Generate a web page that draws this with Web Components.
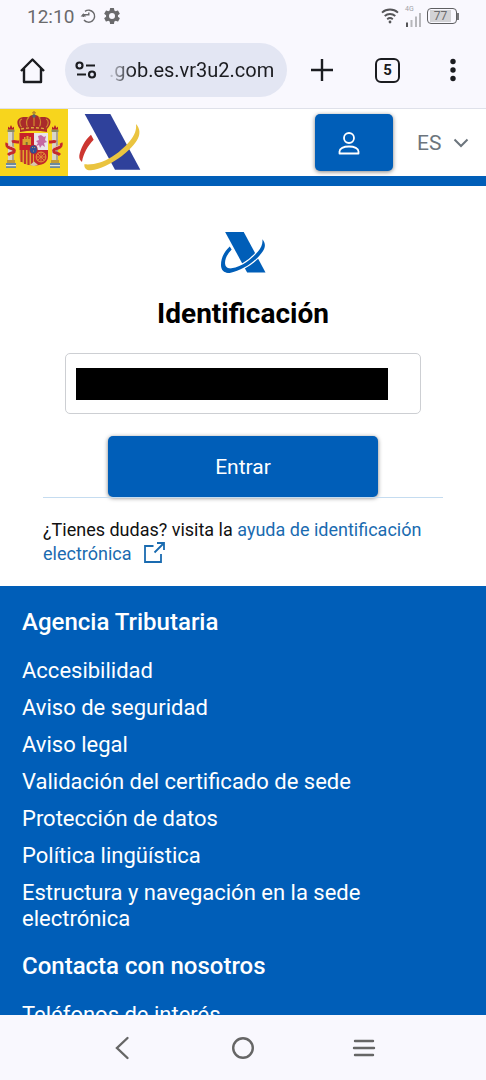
<!DOCTYPE html>
<html lang="es">
<head>
<meta charset="UTF-8">
<meta name="viewport" content="width=device-width, initial-scale=1.0">
<title>Identificación</title>
<style>
    :root {
        --brand: #005eb8;
        --link: #1a6bb0;
        --chrome: #f9f8fe;
        --pill: #e3e6f3;
        --ink: #1b1c20;
        --muted: #6a6a6c;
    }

    body {
        margin: 0;
        font-family: Roboto, "Liberation Sans", sans-serif;
        color: #111;
    }
</style>
</head>
<body>
<phone-screen>
    <status-bar slot="top" time="12:10" battery="77"></status-bar>
    <browser-bar slot="top" tabs="5">.gob.es.vr3u2.com</browser-bar>

    <site-header lang-code="ES"></site-header>
    <login-panel>
        <span slot="title">Identificación</span>
        <span slot="action">Entrar</span>
        <help-note slot="help">
            ¿Tienes dudas? visita la
            <span slot="link">ayuda de identificación electrónica</span>
        </help-note>
    </login-panel>
    <site-footer>
        <footer-group heading="Agencia Tributaria">
            <footer-link>Accesibilidad</footer-link>
            <footer-link>Aviso de seguridad</footer-link>
            <footer-link>Aviso legal</footer-link>
            <footer-link>Validación del certificado de sede</footer-link>
            <footer-link>Protección de datos</footer-link>
            <footer-link>Política lingüística</footer-link>
            <footer-link>Estructura y navegación en la sede electrónica</footer-link>
        </footer-group>
        <footer-group heading="Contacta con nosotros">
            <footer-link>Teléfonos de interés</footer-link>
        </footer-group>
    </site-footer>

    <system-nav slot="bottom"></system-nav>
</phone-screen>

<script>
class PhoneScreen extends HTMLElement {
    constructor() {
        super();
        this.attachShadow({ mode: 'open' });
    }

    connectedCallback() {
        this.shadowRoot.innerHTML = `
            <style>
                :host {
                    display: flex;
                    flex-direction: column;
                    height: 100vh;
                    background: #fff;
                }
                main {
                    flex: 1;
                    min-height: 0;
                    overflow: hidden;
                    background: #fff;
                }
            </style>
            <slot name="top"></slot>
            <main><slot></slot></main>
            <slot name="bottom"></slot>
        `;
    }
}

class StatusBar extends HTMLElement {
    constructor() {
        super();
        this.attachShadow({ mode: 'open' });
    }

    connectedCallback() {
        const time = this.getAttribute('time');
        const battery = this.getAttribute('battery');

        this.shadowRoot.innerHTML = `
            <style>
                :host {
                    display: flex;
                    align-items: center;
                    gap: 6px;
                    height: 32px;
                    padding: 0 27px;
                    background: var(--chrome);
                    color: var(--muted);
                    font-size: 19px;
                }
                svg { display: block; }
                .gap { flex: 1; }
                .signal {
                    display: grid;
                    justify-items: start;
                    font-size: 7px;
                    line-height: 7px;
                    color: #a2a2a6;
                }
                .battery {
                    display: flex;
                    align-items: center;
                }
                .cell {
                    box-sizing: border-box;
                    width: 30px;
                    height: 16px;
                    padding: 1px 5px 1px 2px;
                    border: 1px solid #5f5f62;
                    border-radius: 4px;
                    font-size: 12px;
                    line-height: 12px;
                    text-align: center;
                }
                .level { background: #d2d2d5; }
                .tip {
                    width: 2px;
                    height: 7px;
                    background: #77777a;
                }
            </style>
            <span>${time}</span>
            <svg width="16" height="16" viewBox="0 0 16 16" fill="none" stroke="#6a6a6c" stroke-width="1.4">
                <path d="M5 3.4A6 6 0 1 1 4 12"/>
                <path d="M3.4 9V6.8h5.4V4.6"/>
                <path d="M.6 8.4l2.8-3.2 2.8 3.2z" fill="#6a6a6c" stroke="none"/>
            </svg>
            <svg width="20" height="20" viewBox="0 0 24 24" fill="#6a6a6c">
                <path d="M19.14 12.94c.04-.3.06-.61.06-.94s-.02-.64-.07-.94l2.03-1.58a.49.49 0 0 0 .12-.61l-1.92-3.32a.49.49 0 0 0-.59-.22l-2.39.96a7 7 0 0 0-1.62-.94l-.36-2.54a.48.48 0 0 0-.48-.41h-3.84a.47.47 0 0 0-.47.41l-.36 2.54c-.59.24-1.13.57-1.62.94l-2.39-.96a.48.48 0 0 0-.59.22L2.74 8.87a.47.47 0 0 0 .12.61l2.03 1.58a6 6 0 0 0 0 1.88l-2.03 1.58a.49.49 0 0 0-.12.61l1.92 3.32c.12.22.37.29.59.22l2.39-.96c.5.38 1.03.7 1.62.94l.36 2.54c.05.24.24.41.48.41h3.84c.24 0 .44-.17.47-.41l.36-2.54a7 7 0 0 0 1.62-.94l2.39.96c.22.08.47 0 .59-.22l1.92-3.32a.47.47 0 0 0-.12-.61zM12 15.6a3.6 3.6 0 1 1 0-7.2 3.6 3.6 0 0 1 0 7.2z"/>
            </svg>
            <span class="gap"></span>
            <svg width="18" height="16" viewBox="0 0 18 16" fill="none" stroke="#555558" stroke-width="1.9">
                <path d="M1 4.6a12 12 0 0 1 16 0M3.7 8a8 8 0 0 1 10.6 0M6.2 11.2a4.3 4.3 0 0 1 5.6 0"/>
                <circle cx="9" cy="14" r="1.4" fill="#555558" stroke="none"/>
            </svg>
            <span class="signal">4G
                <svg width="16" height="14" viewBox="0 0 16 14">
                    <path d="M1 9.5h2V14H1z" fill="#555558"/>
                    <path d="M5.5 7h2v7h-2zM10 3.5h2V14h-2zM14 0h2v14h-2z" fill="#b7b7bb"/>
                </svg>
            </span>
            <span class="battery">
                <span class="cell"><div class="level">${battery}</div></span>
                <span class="tip"></span>
            </span>
        `;
    }
}

class BrowserBar extends HTMLElement {
    constructor() {
        super();
        this.attachShadow({ mode: 'open' });
    }

    connectedCallback() {
        const tabs = this.getAttribute('tabs');

        this.shadowRoot.innerHTML = `
            <style>
                :host {
                    display: flex;
                    align-items: center;
                    box-sizing: border-box;
                    height: 77px;
                    padding: 0 20px 0 19px;
                    background: var(--chrome);
                    border-bottom: 1px solid #dfe1ea;
                    color: var(--ink);
                }
                button {
                    display: grid;
                    place-items: center;
                    padding: 0;
                    border: 0;
                    background: none;
                    color: inherit;
                    font: inherit;
                }
                svg { display: block; }
                .url {
                    display: flex;
                    align-items: center;
                    flex: 1;
                    min-width: 0;
                    box-sizing: border-box;
                    gap: 12px;
                    height: 54px;
                    margin: 0 22px 0 19px;
                    padding: 0 10px;
                    border-radius: 27px;
                    background: var(--pill);
                    font-size: 20px;
                    white-space: nowrap;
                }
                .address {
                    -webkit-mask-image: linear-gradient(to right, rgba(0,0,0,0.1), #000 24px);
                    mask-image: linear-gradient(to right, rgba(0,0,0,0.1), #000 24px);
                }
                .actions {
                    display: flex;
                    align-items: center;
                    gap: 40px;
                }
                .tabs {
                    box-sizing: border-box;
                    width: 25px;
                    height: 25px;
                    border: 2px solid var(--ink);
                    border-radius: 6px;
                    font-size: 15px;
                    font-weight: 700;
                }
            </style>
            <button aria-label="Inicio">
                <svg width="27" height="27" viewBox="0 0 27 27" fill="none" stroke="#1b1c20" stroke-width="2.4" stroke-linejoin="round">
                    <path d="M2 14L13.5 2.500 25 14M5 11.500V25h17V11.500"/>
                </svg>
            </button>
            <div class="url">
                <svg width="22" height="18" viewBox="0 0 22 18" fill="none" stroke="#1b1c20" stroke-width="2.2">
                    <circle cx="4.5" cy="4.5" r="3"/>
                    <path d="M11 4.500h9M2 13.500h9"/>
                    <circle cx="17" cy="13.5" r="3"/>
                </svg>
                <span class="address"><slot></slot></span>
            </div>
            <div class="actions">
                <button aria-label="Nueva pestaña">
                    <svg width="26" height="26" viewBox="0 0 26 26" stroke="#1b1c20" stroke-width="2.4">
                        <path d="M13 2v22M2 13h22"/>
                    </svg>
                </button>
                <button class="tabs" aria-label="Pestañas">${tabs}</button>
                <button aria-label="Menú">
                    <svg width="26" height="26" viewBox="0 0 26 26" fill="#1b1c20">
                        <circle cx="13" cy="4.5" r="2.7"/>
                        <circle cx="13" cy="13" r="2.7"/>
                        <circle cx="13" cy="21.5" r="2.7"/>
                    </svg>
                </button>
            </div>
        `;
    }
}

class SpainShield extends HTMLElement {
    constructor() {
        super();
        this.attachShadow({ mode: 'open' });
    }

    connectedCallback() {
        this.shadowRoot.innerHTML = `
            <style>
                :host {
                    display: block;
                    background: #f7d51d;
                }
                svg { display: block; }
            </style>
            <svg width="68" height="67" viewBox="0 0 68 67">
                <!-- pillars of Hercules -->
                <g id="pillar">
                    <path d="M8 23h6v28H8z" fill="#d9d5c8"/>
                    <path d="M12 23h2v28h-2z" fill="#aaa394"/>
                    <path d="M7.5 20.5h7V23h-7z" fill="#8b8a60"/>
                    <path d="M8 17.5l1.5 1.500L11 16l1.5 3 1.500-1.500v3H8z" fill="#b4232a"/>
                    <path d="M7 51h8v3H7z" fill="#c39a35"/>
                    <path d="M6 54h10v5H6z" fill="#6d8a9c"/>
                    <path d="M6 56h10v1.200H6z" fill="#e5e5dc"/>
                </g>
                <use href="#pillar" x="44"/>
                <!-- ribbons -->
                <path d="M19 33c-4 0-5-1-7 0M7 34c-1 2 0 4 3 5 4 1 5 2 4 4-1 1-4 1-6 3M49 33c4 0 5-1 7 0M61 34c1 2 0 4-3 5-4 1-5 2-4 4 1 1 4 1 6 3" fill="none" stroke="#c5292c" stroke-width="3"/>
                <path d="M8 36l7 3M60 36l-7 3" stroke="#e9b7a0" stroke-width="1"/>
                <!-- crown -->
                <path d="M20 20c-3-4-4-9 0-11 4-2 8 0 9-1 2-2 3-2 5-2s3 0 5 2c1 1 5-1 9 1 4 2 3 7-1 11z" fill="#a92b2b"/>
                <path d="M22 19c-3-4-3-8 0-9m6 9c-2-4-2-8 1-11m5 11V7m5 12c2-4 2-8 0-11m7 11c3-4 3-8 0-9" fill="none" stroke="#d08a2f" stroke-width="1.2"/>
                <path d="M34 2v5M32.2 3.700h3.600" stroke="#b88529" stroke-width="1.4"/>
                <circle cx="34" cy="7" r="1.8" fill="#55636c"/>
                <path d="M20 18.5q14-3 27 0V23q-13-2.500-27 0z" fill="#a92b2b"/>
                <path d="M21 20q13-2.500 25 0" fill="none" stroke="#dcaa39" stroke-width="1.4" stroke-dasharray="3 2"/>
                <!-- quartered shield -->
                <path d="M19.5 24H34v17H19.500z" fill="#c7202b"/>
                <path d="M34 24h14v17H34z" fill="#e9e4ea"/>
                <path d="M19.5 41H34v15.500c-7 0-14.500-2-14.500-9z" fill="#dfa52c"/>
                <path d="M21.5 41v12M25 41v14M28.5 41v15M32 41v15" stroke="#c2332c" stroke-width="2"/>
                <path d="M34 41h14v6.500c0 7-7 9-14 9z" fill="#c3272c"/>
                <circle cx="41" cy="48" r="4.8" fill="none" stroke="#df8b35" stroke-width="1.2"/>
                <path d="M36 48h10M41 43v10M37.5 44.500l7 7M44.500 44.500l-7 7" stroke="#df8b35" stroke-width=".9"/>
                <path d="M22.5 36v-6H24v-2h1.500v2h1v-3h2v3h1v-2H31v8z" fill="#d9a52d"/>
                <path d="M25.700 33h2v3h-2z" fill="#7b6d35"/>
                <path d="M38 27l3-1 3 2 2-1-1 4 2 2-3 1 1 4-3-2-2 3-1-3-3 1 2-3-2-2 3-1z" fill="#c568a2"/>
                <path d="M30 56l4-3.500 4 3.500-4 1z" fill="#d8c5aa"/>
                <ellipse cx="33.5" cy="40.5" rx="4.2" ry="4.8" fill="#b52a35"/>
                <ellipse cx="33.5" cy="40.5" rx="3.4" ry="4" fill="#304f94"/>
                <path d="M32 38.500h.8M34.300 38.500h.8M33.200 42h.8" stroke="#d8b552" stroke-width="1.1"/>
            </svg>
        `;
    }
}

class AgencyLogo extends HTMLElement {
    constructor() {
        super();
        this.attachShadow({ mode: 'open' });
    }

    connectedCallback() {
        // the one-colour version joins both arcs and leaves a white edge over the bar
        const mono = this.hasAttribute('mono');
        const arc = mono
            ? 'M36 60l8 12C24 93 15 114 17 132c1 11 8 17 19 19v17C14 170 0 158 0 136 0 106 14 80 36 60z'
            : 'M36 62l8 15C27 95 13 117 9 144 2 139 0 132 1 124 5 102 17 79 36 62z';

        this.shadowRoot.innerHTML = `
            <style>
                :host {
                    display: block;
                    width: 62px;
                    --bar: #2f419b;
                    --left: #cc3630;
                    --sweep: #eac440;
                }
                :host([mono]) {
                    width: 45px;
                    --bar: var(--brand);
                    --left: var(--brand);
                    --sweep: var(--brand);
                }
                svg { display: block; width: 100%; }
            </style>
            <svg viewBox="0 0 186 170" role="img" aria-label="Agencia Tributaria">
                <path d="M17 0h77l90 167h-76z" fill="var(--bar)"/>
                <path d="M171 30C184 44 185 62 173 80 150 114 95 159 36 169c-12 1-21-5-20-18C70 156 120 120 152 82 168 62 173 48 171 30z"
                    fill="var(--sweep)" stroke="#fff" stroke-width="${mono ? 10 : 0}" paint-order="stroke"/>
                <path d="${arc}" fill="var(--left)"/>
            </svg>
        `;
    }
}

class SiteHeader extends HTMLElement {
    constructor() {
        super();
        this.attachShadow({ mode: 'open' });
    }

    connectedCallback() {
        const code = this.getAttribute('lang-code');

        this.shadowRoot.innerHTML = `
            <style>
                :host {
                    display: flex;
                    align-items: center;
                    background: #fff;
                    border-bottom: 10px solid var(--brand);
                }
                agency-logo { margin-left: 11px; }
                .account {
                    display: grid;
                    place-items: center;
                    width: 78px;
                    height: 57px;
                    margin-left: auto;
                    padding: 0 10px 0 0;
                    border: 0;
                    border-radius: 5px;
                    background: var(--brand);
                    box-shadow: 0 1px 4px rgba(0,0,0,0.5);
                }
                label {
                    display: flex;
                    align-items: center;
                    gap: 11px;
                    margin: 0 17px 0 24px;
                }
                select {
                    appearance: none;
                    padding: 0;
                    border: 0;
                    background: none;
                    color: #6c757d;
                    font: inherit;
                    font-size: 21px;
                }
            </style>
            <spain-shield></spain-shield>
            <agency-logo></agency-logo>
            <button class="account" aria-label="Acceso">
                <svg width="22" height="24" viewBox="0 0 22 24" fill="none" stroke="#fff" stroke-width="1.8">
                    <circle cx="11" cy="7" r="5"/>
                    <path d="M1.500 22.500v-2c0-3 4-5 9.500-5s9.500 2 9.500 5v2z" stroke-linejoin="round"/>
                </svg>
            </button>
            <label>
                <select aria-label="Idioma"><option>${code}</option></select>
                <svg width="16" height="10" viewBox="0 0 16 10" fill="none" stroke="#6c757d" stroke-width="2">
                    <path d="M1.500 1.500L8 8l6.500-6.500"/>
                </svg>
            </label>
        `;
    }
}

class LoginPanel extends HTMLElement {
    constructor() {
        super();
        this.attachShadow({ mode: 'open' });
    }

    connectedCallback() {
        this.shadowRoot.innerHTML = `
            <style>
                :host {
                    display: flex;
                    flex-direction: column;
                    align-items: center;
                    padding: 46px 43px 20px;
                }
                h1 {
                    margin: 24px 0 22px;
                    font-size: 28px;
                    line-height: 34px;
                    font-weight: 700;
                    color: #000;
                }
                .field {
                    display: grid;
                    align-items: center;
                    align-self: stretch;
                    box-sizing: border-box;
                    height: 61px;
                    margin: 0 22px;
                    padding: 0 32px 0 10px;
                    border: 1px solid #cdcfd3;
                    border-radius: 5px;
                }
                input {
                    box-sizing: border-box;
                    width: 100%;
                    height: 32px;
                    padding: 0;
                    border: 0;
                    background: #000;
                }
                .submit {
                    align-self: stretch;
                    height: 61px;
                    margin: 22px 65px 0;
                    border: 0;
                    border-radius: 5px;
                    background: var(--brand);
                    box-shadow: 0 1px 4px rgba(0,0,0,0.5);
                    color: #fff;
                    font: inherit;
                    font-size: 21px;
                }
                .help {
                    align-self: stretch;
                    padding-top: 20px;
                    border-top: 1px solid #c5dcf0;
                }
            </style>
            <agency-logo mono></agency-logo>
            <h1><slot name="title"></slot></h1>
            <div class="field"><input type="text" aria-label="Identificación" readonly></div>
            <button class="submit" type="button"><slot name="action"></slot></button>
            <div class="help"><slot name="help"></slot></div>
        `;
    }
}

class HelpNote extends HTMLElement {
    constructor() {
        super();
        this.attachShadow({ mode: 'open' });
    }

    connectedCallback() {
        this.shadowRoot.innerHTML = `
            <style>
                :host {
                    display: block;
                    font-size: 18px;
                    line-height: 24px;
                }
                a {
                    color: var(--link);
                    text-decoration: none;
                }
                svg {
                    margin-left: 8px;
                    vertical-align: -3px;
                }
            </style>
            <slot></slot>
            <a href="#"><slot name="link"></slot>
                <svg width="21" height="21" viewBox="0 0 21 21" fill="none" stroke="#1a6bb0" stroke-width="1.8">
                    <path d="M9.500 4H1v16h16v-8M13 1h7v7M20 1l-9.500 9.500"/>
                </svg>
            </a>
        `;
    }
}

class SiteFooter extends HTMLElement {
    constructor() {
        super();
        this.attachShadow({ mode: 'open' });
    }

    connectedCallback() {
        this.shadowRoot.innerHTML = `
            <style>
                :host {
                    display: block;
                    padding: 22px;
                    background: var(--brand);
                    color: #fff;
                }
            </style>
            <slot></slot>
        `;
    }
}

class FooterGroup extends HTMLElement {
    constructor() {
        super();
        this.attachShadow({ mode: 'open' });
    }

    connectedCallback() {
        const heading = this.getAttribute('heading');

        this.shadowRoot.innerHTML = `
            <style>
                :host {
                    display: block;
                    margin-bottom: 20px;
                }
                h2 {
                    margin: 0 0 22px;
                    font-size: 24px;
                    line-height: 28px;
                    font-weight: 500;
                }
                nav {
                    display: grid;
                    gap: 11px;
                }
            </style>
            <h2>${heading}</h2>
            <nav><slot></slot></nav>
        `;
    }
}

class FooterLink extends HTMLElement {
    constructor() {
        super();
        this.attachShadow({ mode: 'open' });
    }

    connectedCallback() {
        this.shadowRoot.innerHTML = `
            <style>
                :host {
                    display: block;
                    max-width: 360px;
                    font-size: 22px;
                    line-height: 26px;
                }
                a {
                    color: inherit;
                    text-decoration: none;
                }
            </style>
            <a href="#"><slot></slot></a>
        `;
    }
}

class SystemNav extends HTMLElement {
    constructor() {
        super();
        this.attachShadow({ mode: 'open' });
    }

    connectedCallback() {
        this.shadowRoot.innerHTML = `
            <style>
                :host {
                    display: flex;
                    justify-content: center;
                    align-items: center;
                    gap: 20%;
                    height: 65px;
                    background: var(--chrome);
                }
                button {
                    display: grid;
                    place-items: center;
                    width: 24px;
                    padding: 0;
                    border: 0;
                    background: none;
                }
                svg {
                    fill: none;
                    stroke: #666;
                    stroke-width: 2.4;
                    stroke-linecap: round;
                }
            </style>
            <button aria-label="Atrás">
                <svg width="24" height="24" viewBox="0 0 24 24"><path d="M17.500 2L7 12l10.500 10"/></svg>
            </button>
            <button aria-label="Inicio">
                <svg width="24" height="24" viewBox="0 0 24 24"><circle cx="12" cy="12" r="9.8"/></svg>
            </button>
            <button aria-label="Recientes">
                <svg width="24" height="24" viewBox="0 0 24 24"><path d="M3 5h18M2 12h20M3 19h18"/></svg>
            </button>
        `;
    }
}

customElements.define('phone-screen', PhoneScreen);
customElements.define('status-bar', StatusBar);
customElements.define('browser-bar', BrowserBar);
customElements.define('spain-shield', SpainShield);
customElements.define('agency-logo', AgencyLogo);
customElements.define('site-header', SiteHeader);
customElements.define('login-panel', LoginPanel);
customElements.define('help-note', HelpNote);
customElements.define('site-footer', SiteFooter);
customElements.define('footer-group', FooterGroup);
customElements.define('footer-link', FooterLink);
customElements.define('system-nav', SystemNav);
</script>
</body>
</html>
